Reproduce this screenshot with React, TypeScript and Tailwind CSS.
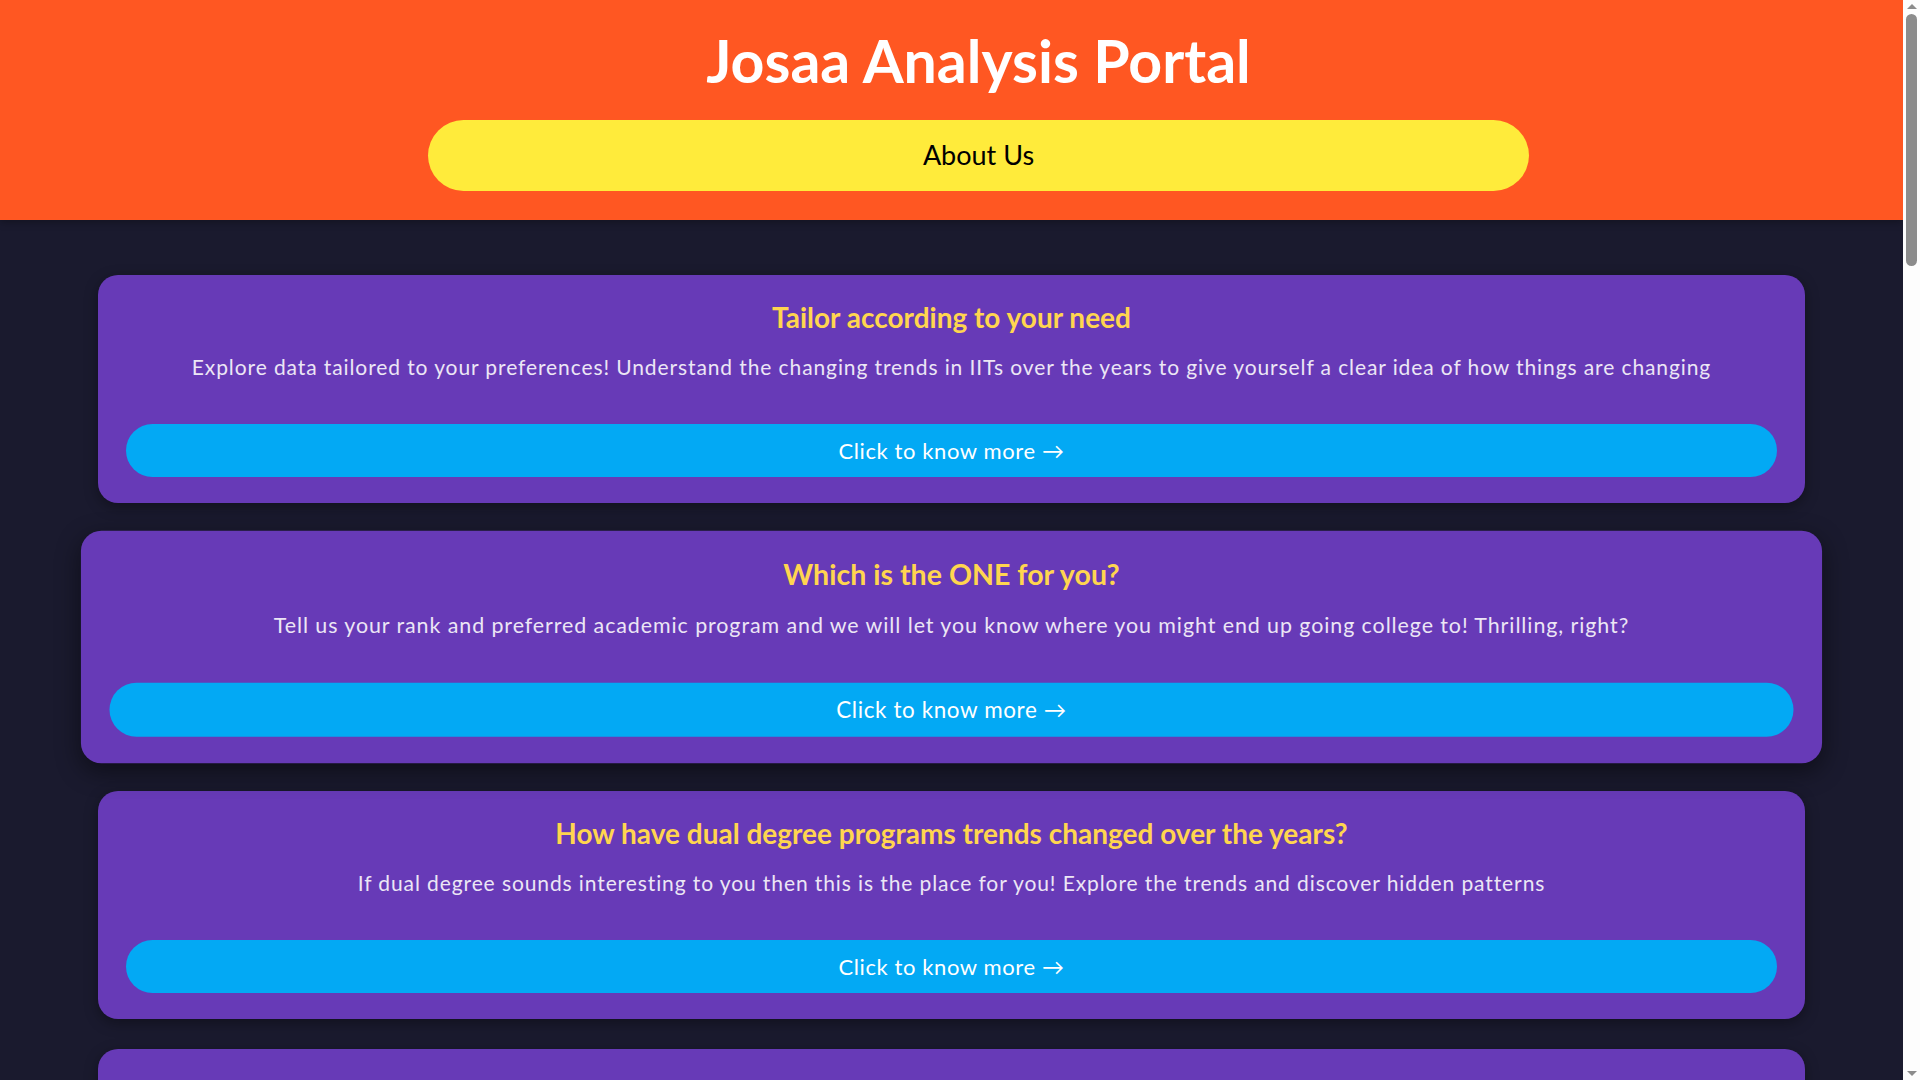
import React from "react";

type Feature = {
  title: string;
  text: string;
};

const features: Feature[] = [
  {
    title: "Tailor according to your need",
    text: "Explore data tailored to your preferences! Understand the changing trends in IITs over the years to give yourself a clear idea of how things are changing",
  },
  {
    title: "Which is the ONE for you?",
    text: "Tell us your rank and preferred academic program and we will let you know where you might end up going college to! Thrilling, right?",
  },
  {
    title: "How have dual degree programs trends changed over the years?",
    text: "If dual degree sounds interesting to you then this is the place for you! Explore the trends and discover hidden patterns",
  },
  {
    title: "Look back at the past",
    text: "Check the opening and closing ranks of every program across the rounds and years to know what to expect this time",
  },
  {
    title: "Compare the institutes",
    text: "Put two institutes side by side and see how their cutoffs have moved over the years",
  },
];

const FeatureCard = ({ item, hovered }: { item: Feature; hovered?: boolean }) => {
  return (
    <div
      className={
        hovered
          ? "relative z-10 scale-[1.02] bg-[#673AB7] rounded-[20px] px-7 pt-[25px] pb-[26px] flex flex-col items-center text-center shadow-[0_8px_24px_rgba(0,0,0,0.45)]"
          : "relative bg-[#673AB7] rounded-[20px] px-7 pt-[25px] pb-[26px] flex flex-col items-center text-center shadow-[0_4px_14px_rgba(0,0,0,0.35)]"
      }
    >
      <h2 className="text-[28px] leading-[34px] font-bold text-[#FFD54F]">{item.title}</h2>
      <p className="mt-[18px] text-[21px] leading-[30px] tracking-[0.9px] text-[#ECE6F5]">
        {item.text}
      </p>
      <button className="mt-[42px] w-full h-[53px] rounded-full bg-[#03A9F4] text-white text-[22px] tracking-[0.6px]">
        Click to know more →
      </button>
    </div>
  );
};

// fake browser scrollbar, as seen on the screenshot
const ScrollBar = () => (
  <div className="fixed top-0 right-0 z-50 h-screen w-[17px] bg-[#FDFDFD] flex flex-col items-center">
    <div className="mt-[4px] w-0 h-0 border-l-[5px] border-r-[5px] border-b-[5px] border-l-transparent border-r-transparent border-b-[#8C8C8C]" />
    <div className="mt-[5px] w-[11px] h-[252px] rounded-full bg-[#8C8C8C]" />
    <div className="mt-auto mb-[4px] w-0 h-0 border-l-[5px] border-r-[5px] border-t-[5px] border-l-transparent border-r-transparent border-t-[#8C8C8C]" />
  </div>
);

export default function App() {
  return (
    <div
      className="min-h-screen bg-[#1A1A2E] pr-[17px]"
      style={{ fontFamily: "Lato, 'Open Sans', sans-serif" }}
    >
      <header className="relative z-20 h-[220px] pl-[54px] bg-[#FF5722] flex flex-col items-center shadow-[0_2px_8px_rgba(0,0,0,0.3)]">
        <h1 className="mt-[26px] text-[59px] leading-[70px] font-bold text-white">
          Josaa Analysis Portal
        </h1>
        <button className="mt-[24px] w-[1101px] h-[71px] rounded-full bg-[#FFEB3B] text-[27px] text-black">
          About Us
        </button>
      </header>

      <main className="px-[98px] pt-[55px] pb-10 flex flex-col gap-[30px]">
        {features.map((f, i) => (
          <FeatureCard key={f.title} item={f} hovered={i === 1} />
        ))}
      </main>

      <ScrollBar />
    </div>
  );
}
